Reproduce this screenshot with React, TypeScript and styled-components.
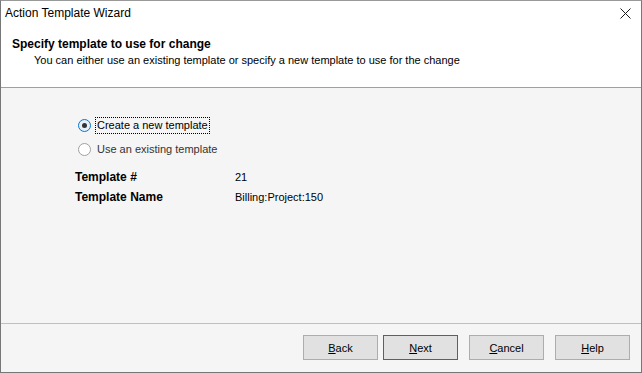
import { createGlobalStyle, styled } from 'styled-components';

const GlobalStyle = createGlobalStyle`
  html, body {
    margin: 0;
    padding: 0;
    background: #ffffff;
  }
  body {
    font-family: 'Liberation Sans', Arial, sans-serif;
    font-size: 11px;
    color: #000000;
  }
`;

export default function App() {
  return (
    <>
      <GlobalStyle />
      <Window>
        <TitleBar>
          <Title>Action Template Wizard</Title>
          <CloseButton aria-label="Close">
            <svg width="11" height="11" viewBox="0 0 11 11">
              <path d="M0.5 0.5 L10.5 10.5 M10.5 0.5 L0.5 10.5" stroke="#1a1a1a" strokeWidth="1" fill="none" />
            </svg>
          </CloseButton>
        </TitleBar>
        <Header>
          <HeaderTitle>Specify template to use for change</HeaderTitle>
          <HeaderDesc>You can either use an existing template or specify a new template to use for the change</HeaderDesc>
        </Header>
        <Body>
          <Options>
            <Option>
              <Radio $checked />
              <OptionLabel $focused>Create a new template</OptionLabel>
            </Option>
            <Option>
              <Radio />
              <OptionLabel $muted>Use an existing template</OptionLabel>
            </Option>
          </Options>
          <Fields>
            <FieldName>Template #</FieldName>
            <FieldValue>21</FieldValue>
            <FieldName>Template Name</FieldName>
            <FieldValue>Billing:Project:150</FieldValue>
          </Fields>
        </Body>
        <Footer>
          <Button>
            <u>B</u>ack
          </Button>
          <Button $default>
            <u>N</u>ext
          </Button>
          <Button $wide>
            <u>C</u>ancel
          </Button>
          <Button $wide>
            <u>H</u>elp
          </Button>
        </Footer>
      </Window>
    </>
  );
}

const Window = styled.div`
  width: 642px;
  height: 373px;
  box-sizing: border-box;
  border: 1px solid #777777;
  border-top-color: #999999;
  display: flex;
  flex-direction: column;
  background: #f5f5f5;
  overflow: hidden;
`;

const TitleBar = styled.div`
  height: 29px;
  display: flex;
  align-items: center;
  justify-content: space-between;
  background: #ffffff;
  padding-left: 4px;
  padding-right: 10px;
`;

const Title = styled.div`
  font-size: 12px;
  margin-top: -5px;
`;

const CloseButton = styled.div`
  display: flex;
  margin-top: -5px;
`;

const Header = styled.div`
  height: 58px;
  background: #ffffff;
  border-bottom: 1px solid #a0a0a0;
  padding-left: 11px;
  padding-top: 6px;
  box-sizing: border-box;
`;

const HeaderTitle = styled.div`
  font-weight: bold;
  font-size: 12px;
  line-height: 16px;
`;

const HeaderDesc = styled.div`
  padding-left: 22px;
  line-height: 16px;
`;

const Body = styled.div`
  flex: 1;
  padding: 29px 0 0 74px;
  border-bottom: 1px solid #c0c0c0;
`;

const Options = styled.div`
  display: flex;
  flex-direction: column;
  gap: 8px;
  padding-left: 3px;
`;

const Option = styled.div`
  display: flex;
  align-items: center;
  height: 16px;
`;

const Radio = styled.span<{ $checked?: boolean }>`
  width: 11px;
  height: 11px;
  border-radius: 50%;
  border: 1px solid ${({ $checked }) => ($checked ? '#0078d7' : '#a0a0a0')};
  background: ${({ $checked }) => ($checked ? '#e5f1fb' : '#ffffff')};
  position: relative;
  margin-right: 5px;
  &::after {
    content: '';
    display: ${({ $checked }) => ($checked ? 'block' : 'none')};
    position: absolute;
    left: 3px;
    top: 3px;
    width: 5px;
    height: 5px;
    border-radius: 50%;
    background: #333333;
  }
`;

const OptionLabel = styled.span<{ $focused?: boolean; $muted?: boolean }>`
  padding: 0 1px;
  line-height: 15px;
  outline: ${({ $focused }) => ($focused ? '1px dotted #000000' : 'none')};
  color: ${({ $muted }) => ($muted ? '#333333' : '#000000')};
`;

const Fields = styled.div`
  display: grid;
  grid-template-columns: 160px auto;
  row-gap: 4px;
  margin-top: 12px;
  line-height: 16px;
`;

const FieldName = styled.div`
  font-weight: bold;
  font-size: 12px;
`;

const FieldValue = styled.div``;

const Footer = styled.div`
  height: 48px;
  display: flex;
  justify-content: flex-end;
  align-items: flex-start;
  padding: 11px 11px 0 0;
  box-sizing: border-box;
  gap: 5px;
`;

const Button = styled.button<{ $default?: boolean; $wide?: boolean }>`
  width: 75px;
  height: 25px;
  margin-left: ${({ $wide }) => ($wide ? '6px' : '0')};
  background: #e1e1e1;
  border: 1px solid ${({ $default }) => ($default ? '#0078d7' : '#adadad')};
  font-family: inherit;
  font-size: 11px;
  color: #000000;
  padding: 0;
`;
